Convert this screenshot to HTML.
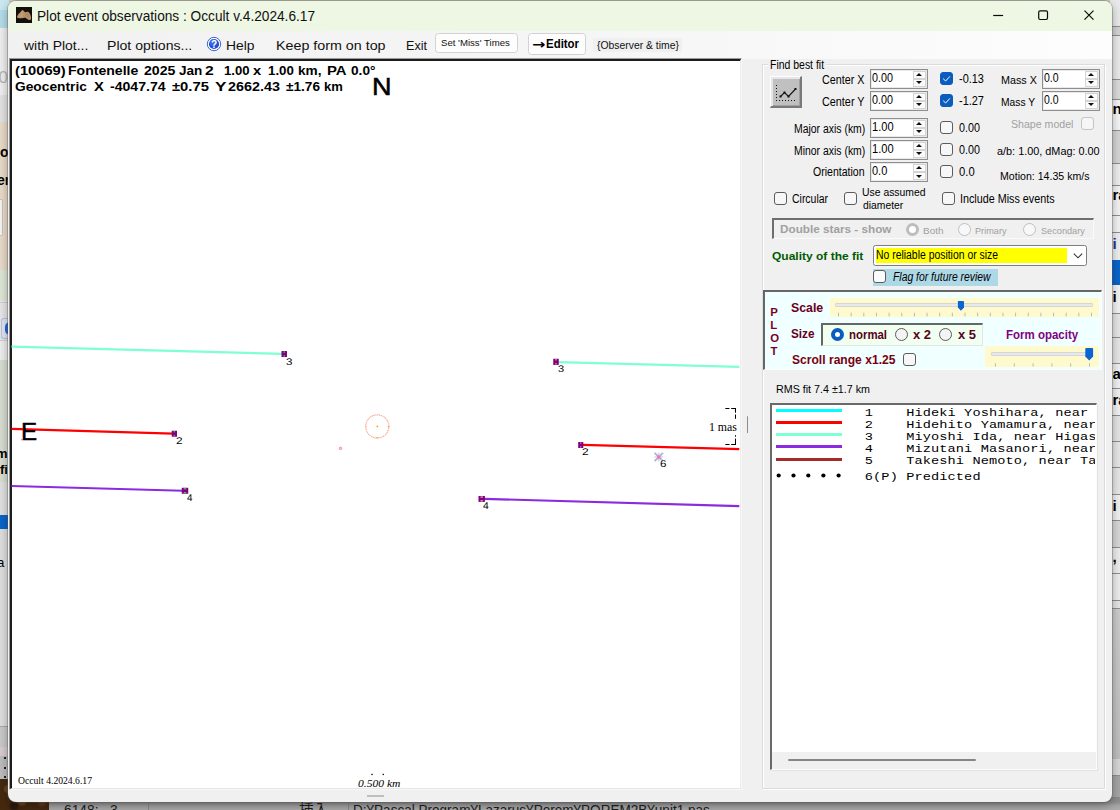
<!DOCTYPE html>
<html lang="en"><head><meta charset="utf-8"><title>Plot event observations : Occult v.4.2024.6.17</title>
<style>
html,body{margin:0;padding:0}
body{width:1120px;height:810px;position:relative;overflow:hidden;background:#dcdcdc;font-family:"Liberation Sans",sans-serif;}
.a{position:absolute;box-sizing:border-box}
span.t{position:absolute;white-space:pre;transform-origin:0 50%;display:block}
.spin{position:absolute;box-sizing:border-box;width:58px;height:19.7px;background:#fff;border:1px solid #8e8e8e;box-shadow:inset 0 0 0 1px #e9e9e9}
.spin i{position:absolute;left:41.5px;width:13px;height:8px;box-sizing:border-box;border:1px solid #d4d4d4;background:#fbfbfb}
.spin i.u{top:1px}.spin i.d{top:8.8px}
.spin i.u:after{content:"";position:absolute;left:2.2px;top:1px;border-left:3.3px solid transparent;border-right:3.3px solid transparent;border-bottom:3.4px solid #111}
.spin i.d:after{content:"";position:absolute;left:2.2px;top:1.6px;border-left:3.3px solid transparent;border-right:3.3px solid transparent;border-top:3.4px solid #111}
.cb{position:absolute;box-sizing:border-box;width:13px;height:13px;border:1px solid #5c5c5c;border-radius:3px;background:#f7f7f7}
.cb.on{background:#0b5cbf;border-color:#0b5cbf}
.cb.dis{border-color:#c4c4c4;background:#f6f6f6}
.rb{position:absolute;box-sizing:border-box;width:13px;height:13px;border:1px solid #5c5c5c;border-radius:50%;background:#f4f4f4}
.rb.dis{border-color:#c0c0c0;background:#f8f8f8}
.ln{position:absolute;height:3px}
</style></head><body>
<!-- desktop / background windows visible around the form -->
<div class="a" style="left:0;top:0;width:1120px;height:2px;background:#cbcab8"></div>
<div class="a" style="left:0;top:0;width:9px;height:10px;background:#c8e8ee"></div>
<div class="a" style="left:0;top:10px;width:9px;height:18px;background:#b4dcea"></div>
<div class="a" style="left:0;top:28px;width:9px;height:67px;background:#eeeeee"></div>
<div class="a" style="left:0;top:95px;width:9px;height:27px;background:#e2e2e2"></div>
<div class="a" style="left:0;top:122px;width:9px;height:148px;background:#e8dac8"></div>
<div class="a" style="left:0;top:270px;width:9px;height:30px;background:#dde6d6"></div>
<div class="a" style="left:0;top:300px;width:9px;height:40px;background:#e6e6e6"></div>
<div class="a" style="left:0;top:340px;width:9px;height:20px;background:#ededed"></div>
<div class="a" style="left:0;top:360px;width:9px;height:122px;background:#d6ddd0"></div>
<div class="a" style="left:0;top:482px;width:9px;height:33px;background:#e0e0e0"></div>
<div class="a" style="left:0;top:515px;width:9px;height:14px;background:#0a64c8"></div>
<div class="a" style="left:0;top:529px;width:9px;height:197px;background:#dedede"></div>
<div class="a" style="left:0;top:726px;width:9px;height:21px;background:#c8c8c8"></div>
<div class="a" style="left:0;top:747px;width:9px;height:9px;background:#d8cccc"></div>
<div class="a" style="left:0;top:756px;width:9px;height:23px;background:#bcbcbc"></div>
<div class="a" style="left:0;top:779px;width:49px;height:31px;background:radial-gradient(circle at 8px 10px,#6a4422 0 3px,transparent 5px),radial-gradient(circle at 22px 22px,#70481f 0 3px,transparent 6px),radial-gradient(circle at 34px 8px,#2a180a 0 3px,transparent 6px),radial-gradient(circle at 42px 24px,#5e3c1c 0 2px,transparent 5px),radial-gradient(circle at 14px 27px,#2c1a0c 0 3px,transparent 6px),#44290f"></div>
<div class="a" style="left:4px;top:757px;width:1.5px;height:1.5px;background:#222"></div><div class="a" style="left:4px;top:767px;width:1.5px;height:1.5px;background:#222"></div><div class="a" style="left:4px;top:776px;width:1.5px;height:1.5px;background:#222"></div>
<div class="a" style="left:0;top:726px;width:9px;height:1px;background:#a8a8a8"></div>
<div class="a" style="left:0;top:199px;width:3px;height:37px;background:#f4f4f4;border:1px solid #c9c0b4;border-left:0;border-radius:0 2px 2px 0"></div>
<div class="a" style="left:0;top:143px;width:8px;height:20px;overflow:hidden;font:bold 14px/18px 'Liberation Sans',sans-serif;color:#000">o</div>
<div class="a" style="left:0;top:171px;width:8px;height:20px;overflow:hidden;font:bold 14px/18px 'Liberation Sans',sans-serif;color:#000"><span style="margin-left:-3px">er</span></div>
<div class="a" style="left:0;top:446px;width:8px;height:18px;overflow:hidden;font:bold 13px/16px 'Liberation Sans',sans-serif;color:#000"><span style="margin-left:-4px">m</span></div>
<div class="a" style="left:0;top:462px;width:8px;height:18px;overflow:hidden;font:bold 13px/16px 'Liberation Sans',sans-serif;color:#000">fi</div>
<div class="a" style="left:0;top:556px;width:8px;height:18px;overflow:hidden;font:13px/16px 'Liberation Mono',monospace;color:#000"><span style="margin-left:-3px">a</span></div>
<div class="a" style="left:0;top:68px;width:8px;height:22px;overflow:hidden;font:17px/20px 'Liberation Sans',sans-serif;color:#b4b4b4"><span style="margin-left:-11px">50</span></div>
<div class="a" style="left:1px;top:318px;width:8px;height:21px;background:#dfe6f2;border:1px solid #b8c4d8;border-right:0;border-radius:3px 0 0 3px"></div>
<div class="a" style="left:5px;top:322px;width:5px;height:13px;background:#2a62d8;border-radius:6px 0 0 6px"></div>
<div class="a" style="left:0;top:302px;width:9px;height:1px;background:#cfcfcf"></div>
<div class="a" style="left:0;top:340px;width:9px;height:1px;background:#cfcfcf"></div>
<!-- right strip -->
<div class="a" style="left:1110px;top:0px;width:10px;height:26px;background:#e9e9e9"></div>
<div class="a" style="left:1110px;top:26px;width:10px;height:9px;background:#d2d2d2"></div>
<div class="a" style="left:1110px;top:35px;width:10px;height:44px;background:#e9e9e9"></div>
<div class="a" style="left:1110px;top:79px;width:10px;height:20px;background:#dadada"></div>
<div class="a" style="left:1110px;top:99px;width:10px;height:31px;background:#f4f4f4"></div>
<div class="a" style="left:1110px;top:130px;width:10px;height:33px;background:#d4d4d4"></div>
<div class="a" style="left:1110px;top:163px;width:10px;height:22px;background:#ededed"></div>
<div class="a" style="left:1110px;top:185px;width:10px;height:47px;background:#f2f2f2"></div>
<div class="a" style="left:1110px;top:232px;width:10px;height:28px;background:#eeeeee"></div>
<div class="a" style="left:1110px;top:260px;width:10px;height:25px;background:#0a64c8"></div>
<div class="a" style="left:1110px;top:285px;width:10px;height:28px;background:#f2f2f2"></div>
<div class="a" style="left:1110px;top:313px;width:10px;height:24px;background:#e6e6e6"></div>
<div class="a" style="left:1110px;top:337px;width:10px;height:26px;background:#e6e6e6"></div>
<div class="a" style="left:1110px;top:363px;width:10px;height:25px;background:#f0f0f0"></div>
<div class="a" style="left:1110px;top:388px;width:10px;height:27px;background:#f0f0f0"></div>
<div class="a" style="left:1110px;top:415px;width:10px;height:26px;background:#e4e4e4"></div>
<div class="a" style="left:1110px;top:441px;width:10px;height:26px;background:#e6e6e6"></div>
<div class="a" style="left:1110px;top:467px;width:10px;height:27px;background:#e6e6e6"></div>
<div class="a" style="left:1110px;top:494px;width:10px;height:26px;background:#f0f0f0"></div>
<div class="a" style="left:1110px;top:520px;width:10px;height:27px;background:#d6d6d6"></div>
<div class="a" style="left:1110px;top:547px;width:10px;height:26px;background:#ececec"></div>
<div class="a" style="left:1110px;top:573px;width:10px;height:27px;background:#ececec"></div>
<div class="a" style="left:1110px;top:600px;width:10px;height:8px;background:#e4e4e4"></div>
<div class="a" style="left:1110px;top:608px;width:10px;height:151px;background:linear-gradient(#cbcbcb,#bdbdbd)"></div>
<div class="a" style="left:1110px;top:759px;width:10px;height:16px;background:#d6d6d6"></div>
<div class="a" style="left:1110px;top:775px;width:10px;height:35px;background:#a4a4a4"></div>
<div class="a" style="left:1110px;top:26px;width:10px;height:1px;background:#8e8e8e"></div>
<div class="a" style="left:1110px;top:35px;width:10px;height:1px;background:#8e8e8e"></div>
<div class="a" style="left:1110px;top:79px;width:10px;height:1px;background:#8e8e8e"></div>
<div class="a" style="left:1110px;top:99px;width:10px;height:1px;background:#8e8e8e"></div>
<div class="a" style="left:1110px;top:130px;width:10px;height:1px;background:#8e8e8e"></div>
<div class="a" style="left:1110px;top:163px;width:10px;height:1px;background:#8e8e8e"></div>
<div class="a" style="left:1110px;top:185px;width:10px;height:1px;background:#8e8e8e"></div>
<div class="a" style="left:1110px;top:215px;width:10px;height:1px;background:#8e8e8e"></div>
<div class="a" style="left:1110px;top:232px;width:10px;height:1px;background:#8e8e8e"></div>
<div class="a" style="left:1110px;top:313px;width:10px;height:1px;background:#8e8e8e"></div>
<div class="a" style="left:1110px;top:337px;width:10px;height:1px;background:#8e8e8e"></div>
<div class="a" style="left:1110px;top:363px;width:10px;height:1px;background:#8e8e8e"></div>
<div class="a" style="left:1110px;top:388px;width:10px;height:1px;background:#8e8e8e"></div>
<div class="a" style="left:1110px;top:415px;width:10px;height:1px;background:#8e8e8e"></div>
<div class="a" style="left:1110px;top:441px;width:10px;height:1px;background:#8e8e8e"></div>
<div class="a" style="left:1110px;top:467px;width:10px;height:1px;background:#8e8e8e"></div>
<div class="a" style="left:1110px;top:494px;width:10px;height:1px;background:#8e8e8e"></div>
<div class="a" style="left:1110px;top:520px;width:10px;height:1px;background:#8e8e8e"></div>
<div class="a" style="left:1110px;top:547px;width:10px;height:1px;background:#8e8e8e"></div>
<div class="a" style="left:1110px;top:573px;width:10px;height:1px;background:#8e8e8e"></div>
<div class="a" style="left:1110px;top:600px;width:10px;height:1px;background:#8e8e8e"></div>
<div class="a" style="left:1110px;top:608px;width:10px;height:1px;background:#8e8e8e"></div>
<div class="a" style="left:1110px;top:775px;width:10px;height:1px;background:#8e8e8e"></div>
<div class="a" style="left:1112.5px;top:100px;width:8px;height:18px;overflow:hidden;font:bold 15px/18px 'Liberation Sans',sans-serif;color:#000;white-space:pre">n</div>
<div class="a" style="left:1112.5px;top:186px;width:8px;height:20px;overflow:hidden;font:bold 15px/18px 'Liberation Sans',sans-serif;color:#000;white-space:pre">ra</div>
<div class="a" style="left:1112.5px;top:235px;width:8px;height:21px;overflow:hidden;font:bold 15px/18px 'Liberation Sans',sans-serif;color:#1a3a8a;white-space:pre">i</div>
<div class="a" style="left:1112.5px;top:288px;width:8px;height:20px;overflow:hidden;font:bold 15px/18px 'Liberation Sans',sans-serif;color:#000;white-space:pre">i</div>
<div class="a" style="left:1112.5px;top:365px;width:8px;height:19px;overflow:hidden;font:bold 15px/18px 'Liberation Sans',sans-serif;color:#000;white-space:pre">a</div>
<div class="a" style="left:1112.5px;top:391px;width:8px;height:20px;overflow:hidden;font:bold 15px/18px 'Liberation Sans',sans-serif;color:#000;white-space:pre">ra</div>
<div class="a" style="left:1112.5px;top:497px;width:8px;height:20px;overflow:hidden;font:bold 15px/18px 'Liberation Sans',sans-serif;color:#000;white-space:pre">i</div>
<div class="a" style="left:1112.5px;top:548px;width:8px;height:18px;overflow:hidden;font:bold 15px/18px 'Liberation Sans',sans-serif;color:#000;white-space:pre">,</div>
<!-- bottom status strip of the window behind -->
<div class="a" style="left:49px;top:797px;width:1071px;height:13px;background:linear-gradient(#8a8a8a,#8e8e8e 5px,#a6a6a6 9px,#ababab);overflow:hidden;font:15.5px/17px 'Liberation Sans','Noto Sans CJK JP',sans-serif;color:#1a1a1a;white-space:pre">
<span class="a" style="left:99px;top:5px;width:1px;height:10px;background:#8a8a8a"></span>
<span class="a" style="left:299px;top:5px;width:1px;height:10px;background:#8a8a8a"></span>
</div>

<!-- the form window -->
<div class="a" id="win" style="left:8px;top:1px;width:1103.5px;height:800.5px;border-radius:8px;background:#f0f0f0;overflow:hidden;box-shadow:0 0 0 1px rgba(90,90,90,.35),0 3px 10px rgba(0,0,0,.35)">
  <div class="a" style="left:0;top:0;width:100%;height:30px;background:#eef6e4"></div>
  <div class="a" style="left:0;top:30px;width:100%;height:27.5px;background:linear-gradient(90deg,#f1f1f1,#f6f6f6 55%,#fdfdfd)"></div>
</div>
<!-- app icon -->
<svg class="a" style="left:16px;top:7px" width="16" height="16" viewBox="0 0 16 16"><rect width="16" height="16" fill="#120e0a"/><path d="M1 10 C1.4 8.2 2.6 6.6 4 5.4 C4.8 4.6 5.8 3.4 6.6 3.1 C7.2 3.2 7.6 3.8 8.1 4.3 C8.6 5 9 5.5 9.6 5.2 C10.4 4.6 11.4 4.5 12.4 5 C13.6 5.8 14.4 7.4 14.9 9.4 C15.2 11 15 12.4 14.3 12.9 C13.4 13.3 12.2 12.8 11.2 12 C10.2 11.2 9.4 10.5 8.4 10.7 C7 11.1 5 11.4 3 11.2 C1.8 11.1 0.9 10.8 1 10Z" fill="#b5926a"/><path d="M3 9.6 C4 7.4 5.4 5.6 6.6 4.4 C7.2 5.4 7.2 7.4 6.6 9.8 C5.2 10.4 3.8 10.4 3 9.6Z" fill="#c9a77e" opacity=".6"/><path d="M9.4 6.4 C10.6 5.8 12 6 13 7.2 C13.8 8.6 14 10.4 13.6 11.6 C12.4 11 11 9.8 9.8 9.2 C9.4 8.2 9.2 7.2 9.4 6.4Z" fill="#a8845c" opacity=".6"/></svg>
<!-- window buttons -->
<svg class="a" style="left:980px;top:1px" width="131" height="30" viewBox="0 0 131 30" fill="none" stroke="#0a0a0a" stroke-width="1.2"><path d="M13.2 14.5H23.1"/><rect x="58.7" y="9.8" width="8.8" height="8.7" rx="1.4"/><path d="M104.5 9.6L113.5 18.6M113.5 9.6L104.5 18.6"/></svg>
<!-- menu: help icon + buttons -->
<svg class="a" style="left:206px;top:36px" width="16" height="16" viewBox="0 0 16 16"><circle cx="8" cy="8" r="6.7" fill="#fff" stroke="#3f62cf" stroke-width="1"/><circle cx="8" cy="8" r="5.1" fill="#1f4fd6"/><circle cx="7.4" cy="6.6" r="3.6" fill="#4f7cf0" opacity=".55"/><text x="8" y="11.6" text-anchor="middle" font-family="Liberation Sans, sans-serif" font-weight="bold" font-size="10" fill="#fff">?</text></svg>
<div class="a" style="left:434.5px;top:32.5px;width:83px;height:20.5px;background:#fdfdfd;border:1px solid #d2d2d2;border-radius:3.5px"></div>
<div class="a" style="left:527.5px;top:32.5px;width:58.5px;height:22px;background:#fdfdfd;border:1px solid #d2d2d2;border-radius:3.5px"></div>
<div class="a" style="left:593px;top:38px;width:89px;height:13.5px;background:#f0f0f0"></div>

<!-- plot picture box -->
<div class="a" style="left:9px;top:58px;width:732.5px;height:732px;border-style:solid;border-width:1px;border-color:#9a9a9a #f7f7f7 #f7f7f7 #9a9a9a;background:#fff">
  <div class="a" style="left:0;top:0;width:100%;height:100%;border-style:solid;border-width:2px 1.5px 1px 2px;border-color:#1c1c1c #ececec #e6e6e6 #1c1c1c"></div>
</div>
<svg class="a" style="left:0;top:0" width="1120" height="810" viewBox="0 0 1120 810">
  <g stroke-width="2.2" fill="none">
    <path d="M11.5 346.7L282.5 353.9M558 362.1L739.3 366.9" stroke="#7fffd4"/>
    <path d="M11.5 428.9L173 433.7M582.5 444.9L739.3 449.2" stroke="#ff0000"/>
    <path d="M11.5 486L183 490.75M484 498.8L739.3 506.1" stroke="#8a2be2"/>
  </g>
  <g fill="#800080">
    <rect x="281.50" y="351.00" width="5.50" height="6.00"/><rect x="283.50" y="351.50" width="1.50" height="1.1" fill="#3fe06a"/><rect x="283.50" y="355.40" width="1.50" height="1.1" fill="#3fe06a"/>
    <rect x="171.75" y="430.75" width="5.25" height="6.00"/><rect x="173.75" y="431.25" width="1.25" height="1.1" fill="#3fe06a"/><rect x="173.75" y="435.15" width="1.25" height="1.1" fill="#3fe06a"/>
    <rect x="181.75" y="487.75" width="6.50" height="6.00"/><rect x="183.75" y="488.25" width="2.50" height="1.1" fill="#3fe06a"/><rect x="183.75" y="492.15" width="2.50" height="1.1" fill="#3fe06a"/>
    <rect x="553.25" y="358.75" width="5.50" height="6.20"/><rect x="555.25" y="359.25" width="1.50" height="1.1" fill="#ffb0c0"/><rect x="555.25" y="363.35" width="1.50" height="1.1" fill="#ffb0c0"/>
    <rect x="578.20" y="442.00" width="5.10" height="6.00"/><rect x="580.20" y="442.50" width="1.10" height="1.1" fill="#ffb0c0"/><rect x="580.20" y="446.40" width="1.10" height="1.1" fill="#ffb0c0"/>
    <rect x="478.50" y="496.00" width="6.40" height="5.90"/><rect x="480.50" y="496.50" width="2.40" height="1.1" fill="#ffc4b0"/><rect x="480.50" y="500.30" width="2.40" height="1.1" fill="#ffc4b0"/>
  </g>
  <circle cx="377.3" cy="426.4" r="11.6" fill="none" stroke="#f4ad9e" stroke-width="1.15" stroke-dasharray="1.25 .55"/>
  <g fill="#ffa500"><circle cx="377.3" cy="426.4" r=".9"/><circle cx="377.3" cy="437.7" r=".8"/><circle cx="388.7" cy="426.6" r=".8"/><circle cx="366" cy="426.4" r=".55" opacity=".7"/></g>
  <circle cx="340.5" cy="448.4" r="1.2" fill="#ffd0e8" stroke="#ff69b4" stroke-width=".9"/>
  <circle cx="21.8" cy="439.8" r=".8" fill="#ff69b4"/>
  <g stroke="#a8b6d8" stroke-width="1.9" stroke-linecap="butt"><path d="M654.6 452.8L663 461.2M663 452.8L654.6 461.2"/><path d="M658.8 452.6V461.4M654.4 457H663.2" stroke-width="1.2" opacity=".7"/></g>
  <circle cx="658.8" cy="457" r="1.8" fill="#ff6eb4"/>
  <path d="M725.3 408.5H729.4M731.2 408.5H736M735.5 408V412.7M735.5 414.5V418.8M735.5 435.2V436.7M735.5 438.6V445M725.3 444.5H729.6M731.2 444.5H736" fill="none" stroke="#000" stroke-width="1"/>
  <rect x="371.4" y="773.8" width="1.3" height="1.3" fill="#000"/><rect x="382.6" y="773.8" width="1.3" height="1.3" fill="#000"/>
  <rect x="367" y="795.5" width="17" height="1" fill="#8c8c8c"/>
  <rect x="747" y="416.3" width="1" height="16.7" fill="#8c8c8c"/>
</svg>

<!-- right hand side panel -->
<div class="a" style="left:761.5px;top:64px;width:343.5px;height:725px;border:1px solid #dcdcdc;box-shadow:inset 1px 1px 0 #fff, 1px 1px 0 #fff"></div>
<div class="a" style="left:768px;top:60px;width:58px;height:10px;background:#f0f0f0"></div>
<!-- best-fit button -->
<div class="a" style="left:770px;top:76px;width:32px;height:32px;background:#c0c0c0;border-style:solid;border-width:1px 2px 2px 1px;border-color:#fff #7a7a7a #7a7a7a #fff;box-shadow:inset 2px 2px 0 #e6e6e6, inset -1px -1px 0 #a0a0a0">
 <svg class="a" style="left:2px;top:3px" width="26" height="24" viewBox="0 0 26 24"><g fill="#111"><rect x="3" y="5" width="1" height="1"/><rect x="3" y="8" width="1" height="1"/><rect x="3" y="11" width="1" height="1"/><rect x="3" y="14" width="1" height="1"/><rect x="3" y="17" width="1" height="1"/><rect x="3" y="20" width="1" height="1"/><rect x="6" y="20" width="1" height="1"/><rect x="9" y="20" width="1" height="1"/><rect x="12" y="20" width="1" height="1"/><rect x="15" y="20" width="1" height="1"/><rect x="18" y="20" width="1" height="1"/><rect x="21" y="20" width="1" height="1"/></g><path d="M7.5 16.5L11.5 12.5L15.5 16.5L22.5 9" stroke="#111" stroke-width="1.1" fill="none"/><g fill="#111"><rect x="6.5" y="15.5" width="2" height="2"/><rect x="10.5" y="11.5" width="2" height="2"/><rect x="14.5" y="15.5" width="2" height="2"/><rect x="21.5" y="8" width="2" height="2"/></g></svg>
</div>
<!-- spin boxes -->
<div class="spin" style="left:870px;top:69px"><i class="u"></i><i class="d"></i></div>
<div class="spin" style="left:870px;top:91px"><i class="u"></i><i class="d"></i></div>
<div class="spin" style="left:870px;top:118px"><i class="u"></i><i class="d"></i></div>
<div class="spin" style="left:870px;top:140px"><i class="u"></i><i class="d"></i></div>
<div class="spin" style="left:870px;top:162.2px"><i class="u"></i><i class="d"></i></div>
<div class="spin" style="left:1042.2px;top:69px"><i class="u"></i><i class="d"></i></div>
<div class="spin" style="left:1042.2px;top:91px"><i class="u"></i><i class="d"></i></div>
<!-- check boxes -->
<div class="cb on" style="left:940px;top:72px"><svg class="a" style="left:-1px;top:-1px" width="13" height="13" viewBox="0 0 13 13"><path d="M3.2 6.7L5.6 9L9.9 4.4" fill="none" stroke="#fff" stroke-width="1"/></svg></div>
<div class="cb on" style="left:940px;top:94px"><svg class="a" style="left:-1px;top:-1px" width="13" height="13" viewBox="0 0 13 13"><path d="M3.2 6.7L5.6 9L9.9 4.4" fill="none" stroke="#fff" stroke-width="1"/></svg></div>
<div class="cb" style="left:940px;top:121px"></div>
<div class="cb" style="left:940px;top:143.2px"></div>
<div class="cb" style="left:940px;top:165px"></div>
<div class="cb dis" style="left:1081px;top:117px"></div>
<div class="cb" style="left:774px;top:192px"></div>
<div class="cb" style="left:844px;top:192px"></div>
<div class="cb" style="left:942.3px;top:192px"></div>
<!-- double stars panel -->
<div class="a" style="left:772.4px;top:218.2px;width:321.5px;height:20.8px;border-style:solid;border-width:2px 1px 1px 2px;border-color:#6e6e6e #fafafa #fafafa #6e6e6e;background:#f0f0f0"></div>
<div class="rb dis" style="left:905.7px;top:223.3px;border:3.6px solid #bdbdbd;background:#fff"></div>
<div class="rb dis" style="left:958.2px;top:223.3px"></div>
<div class="rb dis" style="left:1023px;top:223.3px"></div>
<!-- quality combo -->
<div class="a" style="left:873px;top:245.3px;width:213.6px;height:20.4px;border:1px solid #7e7e7e;border-radius:2.5px;background:#fff"></div>
<div class="a" style="left:876px;top:248.3px;width:191.2px;height:14.6px;background:#ffff00"></div>
<svg class="a" style="left:1072px;top:251px" width="12" height="10" viewBox="0 0 12 10"><path d="M1.8 2.6L6 6.8L10.2 2.6" fill="none" stroke="#333" stroke-width="1.1"/></svg>
<div class="a" style="left:873px;top:269.1px;width:124.9px;height:16.6px;background:#add8e6"></div>
<div class="cb" style="left:873.1px;top:270.2px;background:#fbfbfb"></div>
<!-- PLOT panel -->
<div class="a" style="left:763.4px;top:289.6px;width:338.6px;height:80.8px;background:#f0ffff;border-style:solid;border-width:2px 1px 1px 2px;border-color:#666 #fdfdfd #fdfdfd #666"></div>
<div class="a" style="left:830px;top:298.4px;width:269px;height:18.6px;background:#fffacd"></div>
<div class="a" style="left:835.2px;top:303.3px;width:257.4px;height:3.8px;background:#e7eaea;border:1px solid #d6d6d6;border-radius:1px"></div>
<svg class="a" style="left:830px;top:298px" width="270" height="20" viewBox="0 0 270 20"><path d="M8.5 14.7V18.4M21.15 14.7V18.4M33.8 14.7V18.4M46.45 14.7V18.4M59.1 14.7V18.4M71.75 14.7V18.4M84.4 14.7V18.4M97.05 14.7V18.4M109.7 14.7V18.4M122.35 14.7V18.4M135 14.7V18.4M147.65 14.7V18.4M160.3 14.7V18.4M172.95 14.7V18.4M185.6 14.7V18.4M198.25 14.7V18.4M210.9 14.7V18.4M223.55 14.7V18.4M236.2 14.7V18.4M248.85 14.7V18.4M261.5 14.7V18.4" stroke="#b9b9b9" stroke-width="1"/><path d="M127.9 3.6Q127.9 2.9 128.6 2.9H133.3Q134 2.9 134 3.6V9.6L130.95 12.7L127.9 9.6Z" fill="#0a64d2"/></svg>
<div class="a" style="left:821.2px;top:323.4px;width:162.3px;height:22.4px;background:#f0fff0;border-style:solid;border-width:2px 1px 1px 2px;border-color:#666 #e4e4e4 #e4e4e4 #666"></div>
<div class="rb" style="left:830.7px;top:328px;border:4.1px solid #0b5cbf;background:#fff"></div>
<div class="rb" style="left:894.8px;top:328px"></div>
<div class="rb" style="left:939px;top:328px"></div>
<div class="cb" style="left:903px;top:353px"></div>
<div class="a" style="left:985px;top:346.1px;width:114.3px;height:20.6px;background:#fffacd"></div>
<div class="a" style="left:991.1px;top:352.1px;width:101.5px;height:3.8px;background:#e7eaea;border:1px solid #d6d6d6;border-radius:1px"></div>
<svg class="a" style="left:985px;top:346px" width="115" height="22" viewBox="0 0 115 22"><path d="M10.4 17.2V20.6M29.3 17.2V20.6M48.1 17.2V20.6M66.9 17.2V20.6M85.7 17.2V20.6M104.5 17.2V20.6" stroke="#b9b9b9" stroke-width="1"/><path d="M100.3 2.9Q100.3 2.1 101.1 2.1H107.3Q108.1 2.1 108.1 2.9V10.6L104.2 14.4L100.3 10.6Z" fill="#0a64d2"/></svg>
<!-- legend list box -->
<div class="a" style="left:769.5px;top:402.8px;width:327.3px;height:367.5px;background:#fff;border-style:solid;border-width:2px 1px 1px 2px;border-color:#6a6a6a #fcfcfc #fcfcfc #6a6a6a;box-shadow:1px 1px 0 #e3e3e3;overflow:hidden">
  <div class="a" style="left:0;bottom:0;width:100%;height:17px;background:#f0f0f0"></div>
  <div class="a" style="left:16.5px;bottom:8px;width:188px;height:2px;background:#868686;border-radius:1px"></div>
</div>
<div class="ln" style="left:776px;top:409.2px;width:66px;background:#00ffff"></div>
<div class="ln" style="left:776px;top:421.4px;width:66px;background:#ff0000"></div>
<div class="ln" style="left:776px;top:433.4px;width:66px;background:#7fffd4"></div>
<div class="ln" style="left:776px;top:445.4px;width:66px;background:#8a2be2"></div>
<div class="ln" style="left:776px;top:457.5px;width:66px;background:#a52a2a"></div>
<svg class="a" style="left:770px;top:470px" width="80" height="12" viewBox="0 0 80 12"><g fill="#000"><circle cx="8.7" cy="5.5" r="2.1"/><circle cx="23.5" cy="5.5" r="2.1"/><circle cx="38.3" cy="5.5" r="2.1"/><circle cx="53.4" cy="5.5" r="2.1"/><circle cx="68.6" cy="5.5" r="2.1"/></g></svg>
<div class="a" id="lst" style="left:864.8px;top:403px;width:230.4px;letter-spacing:.11px;height:90px;overflow:hidden;font:13.62px/15px 'Liberation Mono',monospace;color:#000;white-space:pre">
<span class="a" style="left:0;top:2px;transform:scaleY(.86);transform-origin:0 11px">1    Hideki Yoshihara, near </span>
<span class="a" style="left:0;top:14px;transform:scaleY(.86);transform-origin:0 11px">2    Hidehito Yamamura, near </span>
<span class="a" style="left:0;top:26px;transform:scaleY(.86);transform-origin:0 11px">3    Miyoshi Ida, near Higashi</span>
<span class="a" style="left:0;top:38px;transform:scaleY(.86);transform-origin:0 11px">4    Mizutani Masanori, near </span>
<span class="a" style="left:0;top:50px;transform:scaleY(.86);transform-origin:0 11px">5    Takeshi Nemoto, near Tak</span>
<span class="a" style="left:0;top:66px;transform:scaleY(.86);transform-origin:0 11px">6(P) Predicted</span>
</div>
<span class="t" id="t0" style='left:36.76px;top:8px;font:normal normal 14px/16px "Liberation Sans", sans-serif;color:#111;transform:scaleX(0.9770);'>Plot event observations : Occult v.4.2024.6.17</span>
<span class="t" id="t1" style='left:24.07px;top:38px;font:normal normal 13px/15px "Liberation Sans", sans-serif;color:#111;transform:scaleX(1.0735);'>with Plot...</span>
<span class="t" id="t2" style='left:106.99px;top:38px;font:normal normal 13px/15px "Liberation Sans", sans-serif;color:#111;transform:scaleX(1.0826);'>Plot options...</span>
<span class="t" id="t3" style='left:226.01px;top:38px;font:normal normal 13px/15px "Liberation Sans", sans-serif;color:#111;transform:scaleX(1.0658);'>Help</span>
<span class="t" id="t4" style='left:275.97px;top:38px;font:normal normal 13px/15px "Liberation Sans", sans-serif;color:#111;transform:scaleX(1.0983);'>Keep form on top</span>
<span class="t" id="t5" style='left:406.03px;top:38px;font:normal normal 13px/15px "Liberation Sans", sans-serif;color:#111;transform:scaleX(0.9677);'>Exit</span>
<span class="t" id="t6" style='left:441.08px;top:37px;font:normal normal 9.8px/11px "Liberation Sans", sans-serif;color:#111;transform:scaleX(0.9808);'>Set &#x27;Miss&#x27; Times</span>
<span class="t" id="t7" style='left:532.16px;top:36px;font:normal bold 13.5px/16px "DejaVu Sans", sans-serif;color:#000;transform:scaleX(1.1671);'>→</span>
<span class="t" id="t8" style='left:545.60px;top:37px;font:normal bold 12.4px/14px "Liberation Sans", sans-serif;color:#000;transform:scaleX(0.9239);'>Editor</span>
<span class="t" id="t9" style='left:596.81px;top:39px;font:normal normal 10.8px/12px "Liberation Sans", sans-serif;color:#111;transform:scaleX(0.9608);'>{Observer &amp; time}</span>
<span class="t" id="t10" style='left:15.00px;top:64px;font:normal bold 12.4px/14px "Liberation Sans", sans-serif;color:#000;transform:scaleX(1.1855);'>(10069)</span>
<span class="t" id="t11" style='left:67.63px;top:64px;font:normal bold 12.4px/14px "Liberation Sans", sans-serif;color:#000;transform:scaleX(1.1339);'>Fontenelle</span>
<span class="t" id="t12" style='left:143.67px;top:64px;font:normal bold 12.4px/14px "Liberation Sans", sans-serif;color:#000;transform:scaleX(1.1420);'>2025</span>
<span class="t" id="t13" style='left:178.91px;top:64px;font:normal bold 12.4px/14px "Liberation Sans", sans-serif;color:#000;transform:scaleX(1.0903);'>Jan</span>
<span class="t" id="t14" style='left:205.33px;top:64px;font:normal bold 12.4px/14px "Liberation Sans", sans-serif;color:#000;transform:scaleX(1.2665);'>2</span>
<span class="t" id="t15" style='left:224.40px;top:64px;font:normal bold 12.4px/14px "Liberation Sans", sans-serif;color:#000;transform:scaleX(1.0593);'>1.00</span>
<span class="t" id="t16" style='left:253.28px;top:64px;font:normal bold 12.4px/14px "Liberation Sans", sans-serif;color:#000;transform:scaleX(1.1854);'>x</span>
<span class="t" id="t17" style='left:267.54px;top:64px;font:normal bold 12.4px/14px "Liberation Sans", sans-serif;color:#000;transform:scaleX(1.0725);'>1.00</span>
<span class="t" id="t18" style='left:298.44px;top:64px;font:normal bold 12.4px/14px "Liberation Sans", sans-serif;color:#000;transform:scaleX(1.1018);'>km,</span>
<span class="t" id="t19" style='left:326.50px;top:64px;font:normal bold 12.4px/14px "Liberation Sans", sans-serif;color:#000;transform:scaleX(1.2002);'>PA</span>
<span class="t" id="t20" style='left:350.50px;top:64px;font:normal bold 12.4px/14px "Liberation Sans", sans-serif;color:#000;transform:scaleX(1.1018);'>0.0°</span>
<span class="t" id="t21" style='left:15.06px;top:80px;font:normal bold 12.4px/14px "Liberation Sans", sans-serif;color:#000;transform:scaleX(1.1100);'>Geocentric</span>
<span class="t" id="t22" style='left:93.81px;top:80px;font:normal bold 12.4px/14px "Liberation Sans", sans-serif;color:#000;transform:scaleX(1.1971);'>X</span>
<span class="t" id="t23" style='left:110.49px;top:80px;font:normal bold 12.4px/14px "Liberation Sans", sans-serif;color:#000;transform:scaleX(1.1370);'>-4047.74</span>
<span class="t" id="t24" style='left:171.65px;top:80px;font:normal bold 12.4px/14px "Liberation Sans", sans-serif;color:#000;transform:scaleX(1.1923);'>±0.75</span>
<span class="t" id="t25" style='left:215.14px;top:80px;font:normal bold 12.4px/14px "Liberation Sans", sans-serif;color:#000;transform:scaleX(1.3865);'>Y</span>
<span class="t" id="t26" style='left:228.36px;top:80px;font:normal bold 12.4px/14px "Liberation Sans", sans-serif;color:#000;transform:scaleX(1.1591);'>2662.43</span>
<span class="t" id="t27" style='left:286.45px;top:80px;font:normal bold 12.4px/14px "Liberation Sans", sans-serif;color:#000;transform:scaleX(1.0990);'>±1.76</span>
<span class="t" id="t28" style='left:324.02px;top:80px;font:normal bold 12.4px/14px "Liberation Sans", sans-serif;color:#000;transform:scaleX(1.0512);'>km</span>
<span class="t" id="t29" style='left:372.05px;top:74px;font:normal normal 23px/26px "Liberation Sans", sans-serif;color:#000;-webkit-text-stroke:0.5px #000;transform:scaleX(1.1752);'>N</span>
<span class="t" id="t30" style='left:20.64px;top:419px;font:normal normal 23px/26px "Liberation Sans", sans-serif;color:#000;-webkit-text-stroke:0.45px #000;transform:scaleX(1.0516);'>E</span>
<span class="t" id="t31" style='left:285.72px;top:356px;font:normal normal 9.8px/11px "Liberation Sans", sans-serif;color:#000;transform:rotate(.03deg) scale(1.1807,1.001);transform-origin:0 9px;'>3</span>
<span class="t" id="t32" style='left:175.77px;top:435px;font:normal normal 9.8px/11px "Liberation Sans", sans-serif;color:#000;transform:rotate(.03deg) scale(1.2019,1.001);transform-origin:0 9px;'>2</span>
<span class="t" id="t33" style='left:186.73px;top:492px;font:normal normal 9.8px/11px "Liberation Sans", sans-serif;color:#000;transform:rotate(.03deg) scale(1.0000,1.001);transform-origin:0 9px;'>4</span>
<span class="t" id="t34" style='left:557.74px;top:363px;font:normal normal 9.8px/11px "Liberation Sans", sans-serif;color:#000;transform:rotate(.03deg) scale(1.1267,1.001);transform-origin:0 9px;'>3</span>
<span class="t" id="t35" style='left:582.12px;top:446px;font:normal normal 9.8px/11px "Liberation Sans", sans-serif;color:#000;transform:rotate(.03deg) scale(1.2209,1.001);transform-origin:0 9px;'>2</span>
<span class="t" id="t36" style='left:483.20px;top:500px;font:normal normal 9.8px/11px "Liberation Sans", sans-serif;color:#000;transform:rotate(.03deg) scale(1.0516,1.001);transform-origin:0 9px;'>4</span>
<span class="t" id="t37" style='left:660.49px;top:458px;font:normal normal 9.8px/11px "Liberation Sans", sans-serif;color:#000;transform:rotate(.03deg) scale(1.1814,1.001);transform-origin:0 9px;'>6</span>
<span class="t" id="t38" style='left:708.52px;top:420px;font:normal normal 12.5px/14px "Liberation Serif", serif;color:#000;transform:scaleX(0.9465);'>1 mas</span>
<span class="t" id="t39" style='left:18.41px;top:775px;font:normal normal 10px/11px "Liberation Serif", serif;color:#000;transform:scaleX(0.9651);'>Occult 4.2024.6.17</span>
<span class="t" id="t40" style='left:358.04px;top:777px;font:italic normal 11.2px/12px "Liberation Serif", serif;color:#000;transform:scaleX(1.0334);'>0.500 km</span>
<span class="t" id="t41" style='left:769.54px;top:58px;font:normal normal 12px/14px "Liberation Sans", sans-serif;color:#000;transform:scaleX(0.8716);'>Find best fit</span>
<span class="t" id="t42" style='left:822.15px;top:73px;font:normal normal 12px/14px "Liberation Sans", sans-serif;color:#000;transform:scaleX(0.8957);'>Center X</span>
<span class="t" id="t43" style='left:822.14px;top:95px;font:normal normal 12px/14px "Liberation Sans", sans-serif;color:#000;transform:scaleX(0.9022);'>Center Y</span>
<span class="t" id="t44" style='left:793.66px;top:122px;font:normal normal 12px/14px "Liberation Sans", sans-serif;color:#000;transform:scaleX(0.8693);'>Major axis (km)</span>
<span class="t" id="t45" style='left:793.66px;top:144px;font:normal normal 12px/14px "Liberation Sans", sans-serif;color:#000;transform:scaleX(0.8693);'>Minor axis (km)</span>
<span class="t" id="t46" style='left:812.67px;top:165px;font:normal normal 12px/14px "Liberation Sans", sans-serif;color:#000;transform:scaleX(0.8779);'>Orientation</span>
<span class="t" id="t47" style='left:871.90px;top:71px;font:normal normal 12px/14px "Liberation Sans", sans-serif;color:#000;transform:scaleX(0.8972);'>0.00</span>
<span class="t" id="t48" style='left:871.90px;top:93px;font:normal normal 12px/14px "Liberation Sans", sans-serif;color:#000;transform:scaleX(0.8972);'>0.00</span>
<span class="t" id="t49" style='left:871.93px;top:120px;font:normal normal 12px/14px "Liberation Sans", sans-serif;color:#000;transform:scaleX(0.9243);'>1.00</span>
<span class="t" id="t50" style='left:871.93px;top:142px;font:normal normal 12px/14px "Liberation Sans", sans-serif;color:#000;transform:scaleX(0.9243);'>1.00</span>
<span class="t" id="t51" style='left:871.89px;top:164px;font:normal normal 12px/14px "Liberation Sans", sans-serif;color:#000;transform:scaleX(0.9169);'>0.0</span>
<span class="t" id="t52" style='left:1043.79px;top:71px;font:normal normal 12px/14px "Liberation Sans", sans-serif;color:#000;transform:scaleX(0.8750);'>0.0</span>
<span class="t" id="t53" style='left:1043.79px;top:93px;font:normal normal 12px/14px "Liberation Sans", sans-serif;color:#000;transform:scaleX(0.8750);'>0.0</span>
<span class="t" id="t54" style='left:958.65px;top:72px;font:normal normal 12px/14px "Liberation Sans", sans-serif;color:#000;transform:scaleX(0.9115);'>-0.13</span>
<span class="t" id="t55" style='left:958.65px;top:94px;font:normal normal 12px/14px "Liberation Sans", sans-serif;color:#000;transform:scaleX(0.9115);'>-1.27</span>
<span class="t" id="t56" style='left:959.30px;top:121px;font:normal normal 12px/14px "Liberation Sans", sans-serif;color:#000;transform:scaleX(0.8972);'>0.00</span>
<span class="t" id="t57" style='left:959.30px;top:143px;font:normal normal 12px/14px "Liberation Sans", sans-serif;color:#000;transform:scaleX(0.8972);'>0.00</span>
<span class="t" id="t58" style='left:959.29px;top:165px;font:normal normal 12px/14px "Liberation Sans", sans-serif;color:#000;transform:scaleX(0.9378);'>0.0</span>
<span class="t" id="t59" style='left:1000.74px;top:74px;font:normal normal 10.8px/12px "Liberation Sans", sans-serif;color:#000;transform:scaleX(0.9953);'>Mass X</span>
<span class="t" id="t60" style='left:1001.10px;top:96px;font:normal normal 10.8px/12px "Liberation Sans", sans-serif;color:#000;transform:scaleX(0.9519);'>Mass Y</span>
<span class="t" id="t61" style='left:1010.75px;top:118px;font:normal normal 10.8px/12px "Liberation Sans", sans-serif;color:#a0a0a0;transform:scaleX(0.9813);'>Shape model</span>
<span class="t" id="t62" style='left:997.05px;top:145px;font:normal normal 10.6px/12px "Liberation Sans", sans-serif;color:#000;transform:scaleX(1.0253);'>a/b: 1.00, dMag: 0.00</span>
<span class="t" id="t63" style='left:1000.06px;top:170px;font:normal normal 10.6px/12px "Liberation Sans", sans-serif;color:#000;'>Motion: 14.35 km/s</span>
<span class="t" id="t64" style='left:792.17px;top:192px;font:normal normal 12px/14px "Liberation Sans", sans-serif;color:#000;transform:scaleX(0.8719);'>Circular</span>
<span class="t" id="t65" style='left:862.01px;top:186px;font:normal normal 10.6px/12px "Liberation Sans", sans-serif;color:#000;transform:scaleX(0.9816);'>Use assumed</span>
<span class="t" id="t66" style='left:862.68px;top:199px;font:normal normal 10.6px/12px "Liberation Sans", sans-serif;color:#000;transform:scaleX(0.9754);'>diameter</span>
<span class="t" id="t67" style='left:960.04px;top:192px;font:normal normal 12px/14px "Liberation Sans", sans-serif;color:#000;transform:scaleX(0.8974);'>Include Miss events</span>
<span class="t" id="t68" style='left:779.65px;top:223px;font:normal bold 11.4px/12px "Liberation Sans", sans-serif;color:#a0a0a0;transform:scaleX(1.0294);'>Double stars - show</span>
<span class="t" id="t69" style='left:922.64px;top:225px;font:normal normal 9.6px/11px "Liberation Sans", sans-serif;color:#a0a0a0;transform:scaleX(1.0359);'>Both</span>
<span class="t" id="t70" style='left:975.23px;top:225px;font:normal normal 9.6px/11px "Liberation Sans", sans-serif;color:#a0a0a0;transform:scaleX(0.9537);'>Primary</span>
<span class="t" id="t71" style='left:1041.28px;top:225px;font:normal normal 9.6px/11px "Liberation Sans", sans-serif;color:#a0a0a0;transform:scaleX(0.9559);'>Secondary</span>
<span class="t" id="t72" style='left:772.12px;top:249px;font:normal bold 11.8px/14px "Liberation Sans", sans-serif;color:#005a00;transform:scaleX(1.0168);'>Quality of the fit</span>
<span class="t" id="t73" style='left:875.72px;top:248px;font:normal normal 12px/14px "Liberation Sans", sans-serif;color:#000;transform:scaleX(0.8672);'>No reliable position or size</span>
<span class="t" id="t74" style='left:893.32px;top:270px;font:italic normal 12px/14px "Liberation Sans", sans-serif;color:#000;transform:scaleX(0.8658);'>Flag for future review</span>
<span class="t" id="t75" style='left:770.20px;top:306px;font:normal bold 11.4px/12px "Liberation Sans", sans-serif;color:#7a0026;'>P</span>
<span class="t" id="t76" style='left:770.20px;top:319px;font:normal bold 11.4px/12px "Liberation Sans", sans-serif;color:#7a0026;'>L</span>
<span class="t" id="t77" style='left:770.20px;top:332px;font:normal bold 11.4px/12px "Liberation Sans", sans-serif;color:#7a0026;'>O</span>
<span class="t" id="t78" style='left:770.53px;top:345px;font:normal bold 11.4px/12px "Liberation Sans", sans-serif;color:#7a0026;'>T</span>
<span class="t" id="t79" style='left:790.87px;top:301px;font:normal bold 12.6px/14px "Liberation Sans", sans-serif;color:#6a0020;transform:scaleX(0.9794);'>Scale</span>
<span class="t" id="t80" style='left:790.89px;top:327px;font:normal bold 12.6px/14px "Liberation Sans", sans-serif;color:#6a0020;transform:scaleX(0.9324);'>Size</span>
<span class="t" id="t81" style='left:848.73px;top:328px;font:normal bold 12.6px/14px "Liberation Sans", sans-serif;color:#5a0020;transform:scaleX(0.9058);'>normal</span>
<span class="t" id="t82" style='left:912.93px;top:328px;font:normal bold 12.6px/14px "Liberation Sans", sans-serif;color:#5a0020;transform:scaleX(1.0300);'>x 2</span>
<span class="t" id="t83" style='left:957.77px;top:328px;font:normal bold 12.6px/14px "Liberation Sans", sans-serif;color:#5a0020;transform:scaleX(1.0300);'>x 5</span>
<span class="t" id="t84" style='left:791.75px;top:353px;font:normal bold 12.6px/14px "Liberation Sans", sans-serif;color:#7a0010;transform:scaleX(0.9595);'>Scroll range x1.25</span>
<span class="t" id="t85" style='left:1005.54px;top:328px;font:normal bold 12.6px/14px "Liberation Sans", sans-serif;color:#800080;transform:scaleX(0.9124);'>Form opacity</span>
<span class="t" id="t86" style='left:776.20px;top:383px;font:normal normal 11.6px/12px "Liberation Sans", sans-serif;color:#000;transform:scaleX(0.9233);'>RMS fit 7.4 ±1.7 km</span>
<span class="t" id="t87" style='left:63.50px;top:801px;font:normal normal 15.5px/17px "Liberation Sans", "Noto Sans CJK JP", sans-serif;color:#1a1a1a;transform:scaleX(0.8892);'>6148:   3</span>
<span class="t" id="t88" style='left:298.74px;top:801px;font:normal normal 15px/17px "Liberation Sans", "Noto Sans CJK JP", sans-serif;color:#1a1a1a;transform:scaleX(0.9828);'>挿入</span>
<span class="t" id="t89" style='left:352.83px;top:801px;font:normal normal 15.5px/17px "Liberation Sans", "Noto Sans CJK JP", sans-serif;color:#1a1a1a;transform:scaleX(0.8737);'>D:¥Pascal Program¥Lazarus¥Porem¥POREM2B¥unit1.pas</span>
</body></html>
